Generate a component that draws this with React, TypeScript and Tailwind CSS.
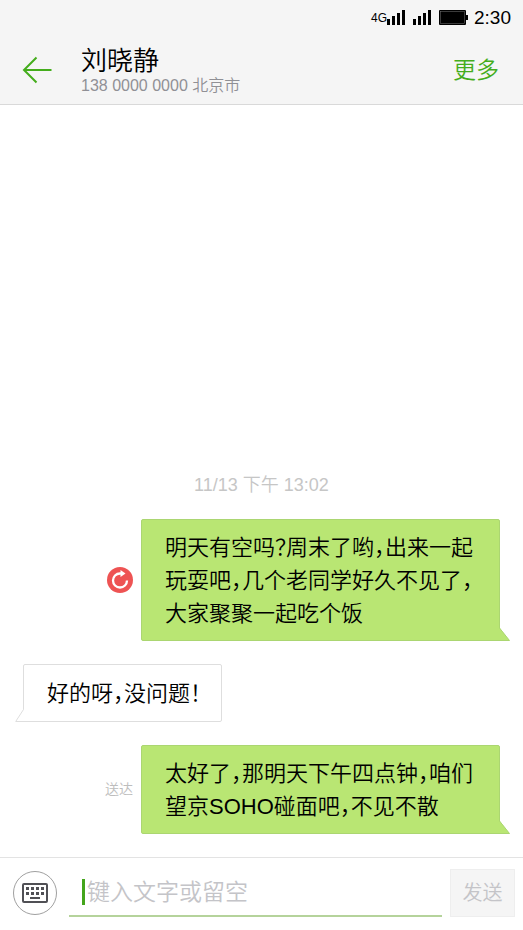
import type { ReactNode } from "react";

const signalHeights = [6, 9, 12, 15];

function Signal({ label }: { label: string }) {
  return (
    <svg role="img" aria-label={label} width="18" height="15" viewBox="0 0 18 15" shapeRendering="crispEdges">
      {signalHeights.map((h, i) => (
        <rect key={h} x={i * 5} y={15 - h} width="3" height={h} fill="#000" />
      ))}
    </svg>
  );
}

function StatusBar() {
  return (
    <div className="flex h-[35px] items-center justify-end pr-3 text-black">
      <span className="text-[12px] leading-none">4G</span>
      <Signal label="信号一" />
      <span className="w-2" />
      <Signal label="信号二" />
      <svg className="ml-2 mr-[6px]" role="img" aria-label="电池" width="29" height="15" viewBox="0 0 29 15">
        <rect width="27" height="15" rx="1" fill="#000" />
        <rect x="1.5" y="1.5" width="24" height="12" fill="none" stroke="#777" strokeWidth=".5" />
        <rect x="27" y="5" width="2" height="5" fill="#000" />
      </svg>
      <span className="text-[19px] leading-none">2:30</span>
    </div>
  );
}

function Header() {
  return (
    <header className="border-b border-[#d9d9d9] bg-[#f5f5f5]">
      <StatusBar />
      <div className="flex h-[69px] items-center pl-[22px] pr-6">
        <button type="button" aria-label="返回" className="h-[30px] w-[30px]">
          <svg width="30" height="30" viewBox="0 0 30 30" fill="none" stroke="#44ad1c" strokeWidth="2">
            <path d="M29.5 15H2M14.5 2.5 2 15l12.500 12.500" />
          </svg>
        </button>
        <div className="ml-[29px] flex-1 pt-[3px]">
          <h1 className="text-[26px] font-[350] leading-[30px] text-black">刘晓静</h1>
          <p className="text-[16px] leading-[20px] text-[#909095]">138 0000 0000 北京市</p>
        </div>
        <button type="button" className="text-[23px] leading-8 text-[#44ad1c]">
          更多
        </button>
      </div>
    </header>
  );
}

function SentMessage({ status, children }: { status: ReactNode; children: ReactNode }) {
  return (
    <li className="flex items-center justify-end gap-2 pr-[23px]">
      {status}
      <div className="relative max-w-[359px] rounded-[2px] border border-[#abd671] bg-[#b9e673] pb-[10px] pl-[23px] pr-5 pt-[11px] text-[22px] leading-[33px] text-black">
        <p>{children}</p>
        <svg className="absolute -bottom-px -right-[11px]" width="12" height="14" viewBox="0 0 12 14" aria-hidden="true">
          <path d="M0 0h1l10.500 13.500H0z" fill="#b9e673" />
          <path d="M1.500 0v1l10 12.500H0" fill="none" stroke="#abd671" />
        </svg>
      </div>
    </li>
  );
}

function ReceivedMessage({ children }: { children: ReactNode }) {
  return (
    <li className="flex pl-[23px]">
      <div className="relative rounded-[2px] border border-[#dedede] bg-white pb-[11px] pl-[23px] pr-5 pt-3 text-[22px] leading-[33px] text-black">
        <p>{children}</p>
        <svg className="absolute -bottom-px -left-[9px]" width="10" height="14" viewBox="0 0 10 14" aria-hidden="true">
          <path d="M10 0H8.500v1.500L.5 13.500H10z" fill="#fff" />
          <path d="M8.500 0v1.500L.7 13.500H10" fill="none" stroke="#dedede" />
        </svg>
      </div>
    </li>
  );
}

function ResendButton() {
  return (
    <button type="button" aria-label="重新发送" className="shrink-0">
      <svg width="26" height="26" viewBox="0 0 26 26" fill="none">
        <circle cx="13" cy="13" r="13" fill="#ee5353" />
        <path d="M15 6.500H13A7 7 0 1 0 20 13.500" stroke="#fff" strokeWidth="2.300" />
        <path d="M13.500 3 18.500 6.500 13.500 10z" fill="#fff" />
      </svg>
    </button>
  );
}

function KeyboardIcon() {
  return (
    <svg width="26" height="20" viewBox="0 0 26 20" fill="#505055" aria-hidden="true">
      <rect x="1" y="1" width="24" height="18" rx="1" fill="none" stroke="#505055" strokeWidth="2" />
      {[4, 9, 14, 19].map((x) => (
        <g key={x}>
          <rect x={x} y="4" width="3" height="3" />
          <rect x={x} y="9" width="3" height="3" />
        </g>
      ))}
      <rect x="8" y="14" width="10" height="2" />
    </svg>
  );
}

function Composer() {
  return (
    <form
      className="flex items-center border-t border-[#e3e3e3] pb-[13px] pl-[13px] pr-2 pt-[11px]"
      onSubmit={(e) => e.preventDefault()}
    >
      <button
        type="button"
        aria-label="键盘"
        className="flex h-11 w-11 shrink-0 items-center justify-center rounded-full border border-[#a0a0a0]"
      >
        <KeyboardIcon />
      </button>
      <div className="ml-3 flex h-12 min-w-0 flex-1 items-center border-b-2 border-[#b5d39b] pl-[13px]">
        <span className="h-[26px] w-[3px] bg-[#44a51c]" />
        <input
          type="text"
          aria-label="短信内容"
          placeholder="键入文字或留空"
          className="ml-[2px] h-10 min-w-0 flex-1 bg-transparent text-[23px] text-black outline-none placeholder:text-[#c4c4c8]"
        />
      </div>
      <button type="submit" className="ml-2 h-12 w-[65px] shrink-0 border border-[#eeeeee] bg-[#f5f5f5] text-[20px] text-[#c4c4c8]">
        发送
      </button>
    </form>
  );
}

export default function App() {
  return (
    <div
      lang="zh-CN"
      className="flex min-h-screen flex-col bg-white font-['Liberation_Sans','Noto_Sans_CJK_SC',sans-serif] font-[350]"
    >
      <Header />
      <main className="flex flex-1 flex-col justify-end pb-[23px]">
        <time className="mb-[22px] text-center text-[18px] leading-6 text-[#c6c6c6]">11/13 下午 13:02</time>
        <ul className="flex flex-col gap-[23px] [font-feature-settings:'halt']">
          <SentMessage status={<ResendButton />}>
            明天有空吗？周末了哟，出来一起玩耍吧，几个老同学好久不见了，大家聚聚一起吃个饭
          </SentMessage>
          <ReceivedMessage>好的呀，没问题！</ReceivedMessage>
          <SentMessage status={<span className="shrink-0 text-[14px] text-[#bdbdbd]">送达</span>}>
            太好了，那明天下午四点钟，咱们望京SOHO碰面吧，不见不散
          </SentMessage>
        </ul>
      </main>
      <Composer />
    </div>
  );
}
